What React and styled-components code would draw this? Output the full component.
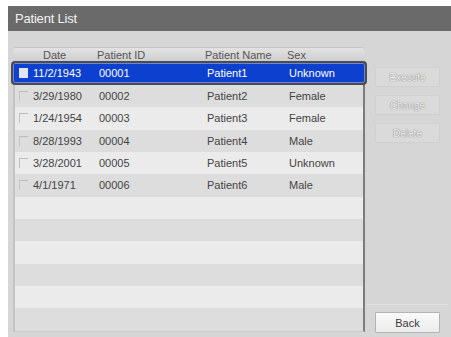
import React from "react";
import styled, { createGlobalStyle } from "styled-components";

const patients = [
  { date: "11/2/1943", id: "00001", name: "Patient1", sex: "Unknown" },
  { date: "3/29/1980", id: "00002", name: "Patient2", sex: "Female" },
  { date: "1/24/1954", id: "00003", name: "Patient3", sex: "Female" },
  { date: "8/28/1993", id: "00004", name: "Patient4", sex: "Male" },
  { date: "3/28/2001", id: "00005", name: "Patient5", sex: "Unknown" },
  { date: "4/1/1971", id: "00006", name: "Patient6", sex: "Male" },
];

const TOTAL_ROWS = 12;

export default function App() {
  const rows = [];
  for (let i = 0; i < TOTAL_ROWS; i++) rows.push(patients[i] || null);

  return (
    <>
      <GlobalStyle />
      <Window>
        <TitleBar>Patient List</TitleBar>
        <Content>
          <TablePanel>
            <Header>
              <span />
              <HeadCell $indent={12}>Date</HeadCell>
              <HeadCell>Patient ID</HeadCell>
              <HeadCell>Patient Name</HeadCell>
              <HeadCell>Sex</HeadCell>
            </Header>
            <Body>
              {rows.map((p, i) => (
                <Row key={i} $odd={i % 2 === 1} $selected={i === 0}>
                  {p ? (
                    <>
                      <Check $selected={i === 0} />
                      <Cell>{p.date}</Cell>
                      <Cell>{p.id}</Cell>
                      <Cell>{p.name}</Cell>
                      <Cell>{p.sex}</Cell>
                    </>
                  ) : null}
                </Row>
              ))}
            </Body>
          </TablePanel>
          <Side>
            <Actions>
              <Button disabled>Execute</Button>
              <Button disabled>Change</Button>
              <Button disabled>Delete</Button>
            </Actions>
            <Footer>
              <Button>Back</Button>
            </Footer>
          </Side>
        </Content>
      </Window>
    </>
  );
}

const GlobalStyle = createGlobalStyle`
  body {
    margin: 0;
    background: #ffffff;
    font-family: "Liberation Sans", Arial, sans-serif;
  }
`;

const Window = styled.div`
  margin: 6px 0 0 8px;
  width: 443px;
  height: 331px;
  display: flex;
  flex-direction: column;
  background: #d6d6d6;
`;

const TitleBar = styled.div`
  height: 25px;
  line-height: 25px;
  padding-left: 7px;
  background: #6a6a6a;
  color: #f2f2f2;
  font-size: 13px;
  letter-spacing: -0.2px;
`;

const Content = styled.div`
  flex: 1;
  display: flex;
  padding: 16px 3px 0 5px;
`;

const TablePanel = styled.div`
  width: 352px;
  height: 285px;
  display: flex;
  flex-direction: column;
`;

const columns = "18px 66px 108px 82px 1fr";

const Header = styled.div`
  height: 15px;
  display: grid;
  grid-template-columns: ${columns};
  align-items: center;
  border-radius: 2px 4px 0 0;
  background: linear-gradient(#e2e2e2, #cdcdcd);
  border-top: 1px solid #c4c4c4;
  box-sizing: border-box;
`;

const HeadCell = styled.span`
  font-size: 11px;
  line-height: 12px;
  color: #555555;
  padding-left: ${(p) => p.$indent || 0}px;
  white-space: nowrap;
`;

const Body = styled.div`
  flex: 1;
  display: flex;
  flex-direction: column;
  border-left: 2px solid #c4c4c4;
  border-right: 2px solid #7c7c7c;
  border-bottom: 1px solid #c8c8c8;
`;

const Row = styled.div`
  height: 22.33px;
  box-sizing: border-box;
  display: grid;
  grid-template-columns: ${columns};
  align-items: center;
  font-size: 11px;
  color: ${(p) => (p.$selected ? "#ffffff" : "#444444")};
  background: ${(p) =>
    p.$selected ? "#0d40cf" : p.$odd ? "#dddddd" : "#ebebeb"};
  ${(p) =>
    p.$selected &&
    `
    margin: -1px -4px 0 -4px;
    height: 24px;
    padding-left: 2px;
    border: 2px solid #4c4c4c;
    border-radius: 4px;
    position: relative;
    box-shadow: inset 0 0 0 1px #6b86d8;
  `}
`;

const Check = styled.span`
  width: 9px;
  height: 10px;
  margin-left: 4px;
  box-sizing: border-box;
  background: ${(p) => (p.$selected ? "#dfe4f6" : "transparent")};
  border-top: 1px solid ${(p) => (p.$selected ? "#dfe4f6" : "#bcbcbc")};
  border-left: 1px solid ${(p) => (p.$selected ? "#dfe4f6" : "#c4c4c4")};
`;

const Cell = styled.span`
  white-space: nowrap;
`;

const Side = styled.div`
  flex: 1;
  display: flex;
  flex-direction: column;
  padding-left: 10px;
`;

const Actions = styled.div`
  display: flex;
  flex-direction: column;
  gap: 8px;
  padding-top: 20px;
  flex: 1;
`;

const Footer = styled.div`
  border-top: 1px solid #e2e2e2;
  margin-left: -8px;
  padding: 7px 0 4px 8px;
`;

const Button = styled.button`
  display: block;
  width: 65px;
  height: ${(p) => (p.disabled ? 20 : 21)}px;
  padding: 0;
  font-family: "Liberation Sans", Arial, sans-serif;
  font-size: ${(p) => (p.disabled ? 10 : 11)}px;
  border-radius: 1px;
  cursor: default;
  border: 1px solid ${(p) => (p.disabled ? "#d0d0d0" : "#b4b4b4")};
  background: ${(p) =>
    p.disabled ? "#dadada" : "linear-gradient(#fafafa, #ececec)"};
  color: ${(p) => (p.disabled ? "#f2f2f2" : "#3a3a3a")};
  text-shadow: ${(p) =>
    p.disabled ? "0 0 1px #7a7a7a, 0 0 1px #9a9a9a" : "none"};
`;
